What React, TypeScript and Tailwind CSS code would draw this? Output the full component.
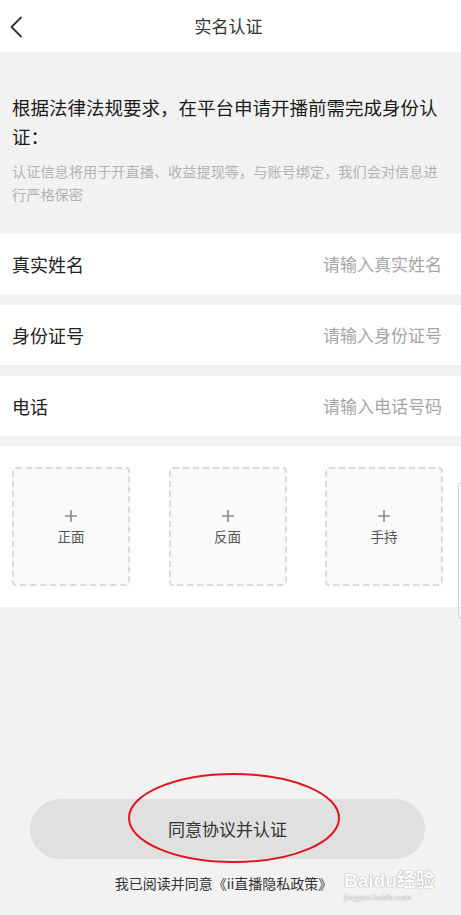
const fields = [
  { label: "真实姓名", hint: "请输入真实姓名" },
  { label: "身份证号", hint: "请输入身份证号" },
  { label: "电话", hint: "请输入电话号码" },
];

const uploads = ["正面", "反面", "手持"];

export default function App() {
  return (
    <div className="relative w-[461px] h-[915px] overflow-hidden bg-[#f2f2f2] font-['Noto_Sans_CJK_SC',sans-serif] text-[#222]">
      {/* header */}
      <div className="relative h-[52px] bg-white flex items-center justify-center">
        <svg className="absolute left-0 top-0" width="32" height="52" viewBox="0 0 32 52">
          <polyline points="21,17.5 11.5,27 21,36.5" fill="none" stroke="#333" strokeWidth="1.8" strokeLinecap="round" strokeLinejoin="round" />
        </svg>
        <h1 className="text-[17px] text-[#333] pr-[4px]">实名认证</h1>
      </div>

      {/* intro */}
      <div className="px-3 pt-[41px] pb-[28px]">
        <p className="text-[18.5px] leading-[29px] text-[#1a1a1a]">根据法律法规要求，在平台申请开播前需完成身份认证：</p>
        <p className="mt-[9px] text-[14.2px] leading-[23px] text-[#b3b3b3]">认证信息将用于开直播、收益提现等，与账号绑定，我们会对信息进行严格保密</p>
      </div>

      {/* fields */}
      <div className="flex flex-col gap-[11px]">
        {fields.map((f) => (
          <div key={f.label} className="h-[60px] bg-white px-3 flex items-center justify-between">
            <span className="text-[18px] text-[#222]">{f.label}</span>
            <span className="text-[17px] text-[#a6a6a6] pr-[7px]">{f.hint}</span>
          </div>
        ))}
      </div>

      {/* uploads */}
      <div className="mt-[10px] h-[161px] bg-white px-3 flex items-center justify-between pr-[18px]">
        {uploads.map((u) => (
          <div key={u} className="w-[118px] h-[119px] rounded-[4px] border-2 border-dashed border-[#dadada] bg-[#f9f9f9] flex flex-col items-center justify-center pt-[2px]">
            <svg width="14" height="14" viewBox="0 0 14 14">
              <path d="M7 1v12M1 7h12" stroke="#8a8a8a" strokeWidth="1.6" />
            </svg>
            <span className="mt-[3px] text-[13.5px] text-[#555]">{u}</span>
          </div>
        ))}
      </div>
      <div className="absolute left-[458px] top-[482px] w-[8px] h-[138px] rounded-[4px] border border-[#d4d4d4]" />

      {/* button */}
      <div className="mt-[192px] px-[30px] pr-[36px]">
        <button className="w-full h-[60px] rounded-full bg-[#e0e0e0] text-[17px] text-[#333]">同意协议并认证</button>
      </div>
      <p className="mt-[14px] text-center pr-[14px] text-[14px] text-[#333]">我已阅读并同意《ii直播隐私政策》</p>

      {/* red annotation ellipse */}
      <svg className="absolute left-[125px] top-[770px]" width="220" height="96" viewBox="0 0 220 96">
        <ellipse cx="109" cy="48" rx="105" ry="44" fill="none" stroke="#e0161c" strokeWidth="2" />
      </svg>

      {/* watermark */}
      <div className="absolute left-[344px] top-[870px] flex flex-col items-start whitespace-nowrap text-white [text-shadow:0_0_1px_#9a9a9a,0_0_1px_#9a9a9a]">
        <span className="text-[19px] leading-[22px] font-bold font-['Liberation_Sans','Noto_Sans_CJK_SC',sans-serif]">Baidu经验</span>
        <span className="text-[9px] leading-[10px] font-['Liberation_Serif',serif]">jingyan.baidu.com</span>
      </div>
    </div>
  );
}
